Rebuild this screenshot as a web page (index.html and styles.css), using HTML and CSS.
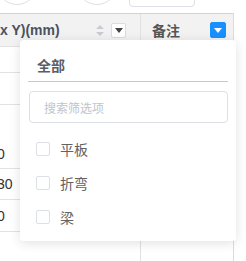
FILE: index.html
```html
<!DOCTYPE html>
<html lang="zh-CN">
<head>
  <meta charset="UTF-8" />
  <meta name="viewport" content="width=device-width, initial-scale=1.0"/>
  <title>筛选</title>
  <link rel="stylesheet" href="styles.css">
</head>
<body>
  <div class="toolbar">
    <span class="round round-a"></span>
    <span class="round round-b"></span>
    <span class="select-box"></span>
  </div>

  <div class="grid">
    <div class="th th-size">
      <span class="th-label">x Y)(mm)</span>
      <span class="sorter">
        <svg width="8" height="11" viewBox="0 0 8 11"><path d="M4 0 L8 4 L0 4 Z" fill="#c8cbd1"/><path d="M0 7 L8 7 L4 11 Z" fill="#c8cbd1"/></svg>
      </span>
      <span class="filter-btn">
        <svg width="8" height="5" viewBox="0 0 8 5"><path d="M0 0 L8 0 L4 5 Z" fill="#444"/></svg>
      </span>
    </div>
    <div class="th th-note">
      <span class="th-label">备注</span>
      <span class="filter-btn active">
        <svg width="8" height="5" viewBox="0 0 8 5"><path d="M0 0 L8 0 L4 5 Z" fill="#fff"/></svg>
      </span>
    </div>

    <div class="td r1"></div><div class="td r1"></div>
    <div class="td r2"></div><div class="td r2"></div>
    <div class="td r3 bottom"><span class="num">0</span></div><div class="td r3"></div>
    <div class="td r4"><span class="num">30</span></div><div class="td r4"></div>
    <div class="td r5"><span class="num">0</span></div><div class="td r5"></div>
    <div class="td r6"></div><div class="td r6"></div>
  </div>

  <div class="filter-pop">
    <div class="pop-title">全部</div>
    <input class="pop-search" type="text" placeholder="搜索筛选项" />
    <ul class="pop-list">
      <li><span class="check"></span>平板</li>
      <li><span class="check"></span>折弯</li>
      <li><span class="check"></span>梁</li>
    </ul>
  </div>
</body>
</html>
```

FILE: styles.css
```css
body {
  margin: 0;
  background: #fff;
  color: #333;
  font-family: "Liberation Sans", "Noto Sans CJK SC", sans-serif;
  font-size: 14px;
  overflow: hidden;
}

.toolbar {
  height: 13px;
  display: flex;
  align-items: flex-end;
}

.round {
  width: 40px;
  height: 40px;
  border: 1px solid #dcdfe6;
  border-radius: 50%;
  margin-bottom: 8px;
  box-sizing: border-box;
  flex: none;
}

.round-a {
  margin-left: -3px;
}

.round-b {
  margin-left: 40px;
}

.select-box {
  width: 66px;
  height: 30px;
  margin-left: 12px;
  margin-bottom: 6px;
  border: 1px solid #dcdfe6;
  border-radius: 4px;
  box-sizing: border-box;
  flex: none;
}

.grid {
  display: grid;
  grid-template-columns: 141px 92px;
  width: 233px;
  border-top: 1px solid #cfd2d6;
  border-right: 1px solid #dcdcdc;
}

.th {
  height: 32px;
  background: #f2f2f2;
  border-bottom: 1px solid #e2e2e2;
  display: flex;
  align-items: center;
  font-weight: bold;
  color: #4a5260;
}

.th-size {
  border-right: 1px solid #e2e2e2;
  padding-right: 14px;
}

.th-note {
  padding-left: 11px;
  padding-right: 7px;
  color: #555;
}

.th-label {
  white-space: nowrap;
}

.sorter {
  margin-left: auto;
  margin-right: 7px;
  display: flex;
}

.filter-btn {
  width: 15px;
  height: 15px;
  box-sizing: border-box;
  border: 1px solid #dcdcdc;
  border-radius: 2px;
  background: #fff;
  display: flex;
  align-items: center;
  justify-content: center;
}

.th-note .filter-btn {
  margin-left: auto;
  width: 16px;
  height: 16px;
}

.filter-btn.active {
  background: #1890ff;
  border-color: #1890ff;
}

.td {
  border-bottom: 1px solid #e2e2e2;
  display: flex;
  align-items: center;
}

.td:nth-child(odd) {
  border-right: 1px solid #e2e2e2;
}

.r1 { height: 25px; }
.r2 { height: 31px; }
.r3 { height: 63px; }
.r4 { height: 30px; }
.r5 { height: 31px; }
.r6 { height: 30px; }

.td.bottom {
  align-items: flex-end;
  padding-bottom: 6px;
  height: 57px;
}

.num {
  margin-left: -3px;
  color: #333;
}

.filter-pop {
  position: absolute;
  left: 20px;
  top: 40px;
  width: 216px;
  height: 201px;
  box-sizing: border-box;
  padding: 0 8px;
  background: #fff;
  border-radius: 4px;
  box-shadow: 0 2px 12px rgba(0, 0, 0, 0.12);
}

.pop-title {
  padding: 14px 0 5px 9px;
  line-height: 22px;
  font-weight: bold;
  color: #5a5e66;
  border-bottom: 1px solid #c4c8cf;
  font-family: "Noto Sans CJK SC", sans-serif;
}

.pop-search {
  display: block;
  width: 199px;
  height: 32px;
  margin: 9px 0 0 1px;
  padding: 0 14px;
  box-sizing: border-box;
  border: 1px solid #dcdfe6;
  border-radius: 4px;
  font-size: 12px;
  font-family: "Noto Sans CJK SC", sans-serif;
  outline: none;
}

.pop-search::placeholder {
  color: #c0c4cc;
}

.pop-list {
  list-style: none;
  margin: 9px 0 0;
  padding: 0;
}

.pop-list li {
  height: 34px;
  display: flex;
  align-items: center;
  padding-left: 8px;
  color: #606266;
  font-family: "Noto Sans CJK SC", sans-serif;
}

.check {
  width: 14px;
  height: 14px;
  box-sizing: border-box;
  border: 1px solid #dcdfe6;
  border-radius: 2px;
  margin-right: 10px;
}
```
